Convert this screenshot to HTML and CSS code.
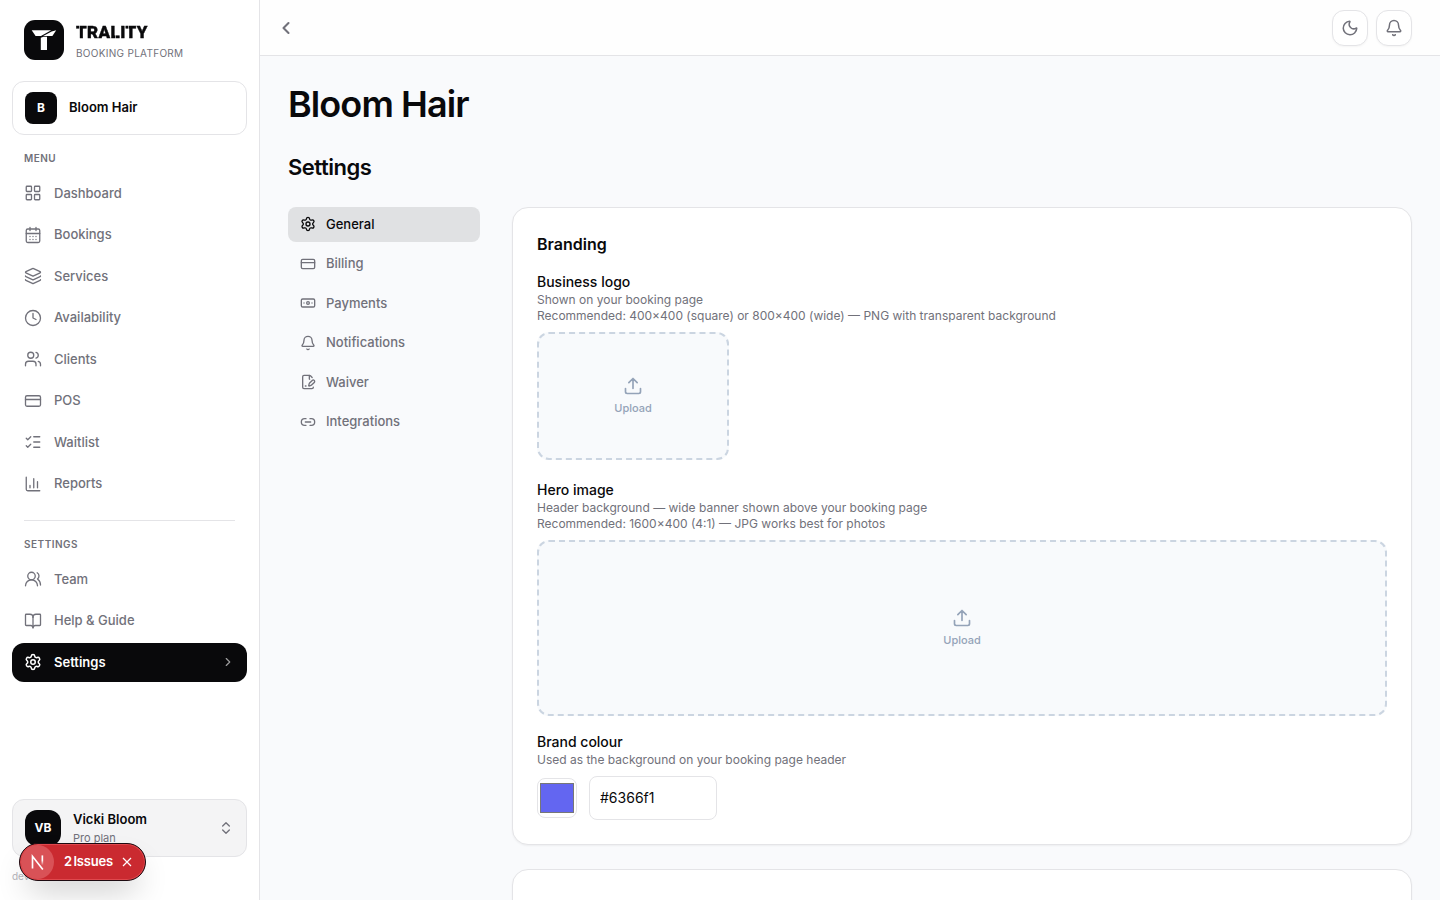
FILE: index.html
```
<!DOCTYPE html>
<html lang="en">
<head>
    <meta charset="UTF-8">
    <title>Settings - Bloom Hair</title>
    <link rel="stylesheet" href="styles.css">
</head>
<body>

<aside class="sidebar">
    <div class="brand">
        <svg class="brand-mark" viewBox="0 0 40 40">
            <rect width="40" height="40" rx="11" fill="#09090b"/>
            <path d="M7.7 10.2H27.2L17 15.9H11.6Z" fill="#fff"/>
            <path d="M27.6 11.5L32.2 10.2L28.4 15.9H19.2Z" fill="#fff"/>
            <path d="M16.8 17.8L19.5 16.7H23V30H16.8Z" fill="#fff"/>
        </svg>
        <div>
            <div class="brand-name">TRALITY</div>
            <div class="brand-sub">BOOKING PLATFORM</div>
        </div>
    </div>

    <div class="org">
        <div class="org-avatar">B</div>
        <span>Bloom Hair</span>
    </div>

    <div class="nav-label">MENU</div>
    <nav class="nav">
        <a class="nav-item">
            <svg class="icon" viewBox="0 0 24 24"><rect x="3" y="3" width="7" height="7" rx="1"/><rect x="14" y="3" width="7" height="7" rx="1"/><rect x="14" y="14" width="7" height="7" rx="1"/><rect x="3" y="14" width="7" height="7" rx="1"/></svg>
            Dashboard
        </a>
        <a class="nav-item">
            <svg class="icon" viewBox="0 0 24 24"><path d="M8 2v4M16 2v4"/><rect x="3" y="4" width="18" height="18" rx="2"/><path d="M3 10h18M8 14h.01M12 14h.01M16 14h.01M8 18h.01M12 18h.01M16 18h.01"/></svg>
            Bookings
        </a>
        <a class="nav-item">
            <svg class="icon" viewBox="0 0 24 24"><path d="M12.83 2.18a2 2 0 0 0-1.66 0L2.6 6.08a1 1 0 0 0 0 1.83l8.58 3.91a2 2 0 0 0 1.66 0l8.58-3.9a1 1 0 0 0 0-1.83z"/><path d="M2 12a1 1 0 0 0 .58.91l8.6 3.91a2 2 0 0 0 1.65 0l8.58-3.9A1 1 0 0 0 22 12"/><path d="M2 17a1 1 0 0 0 .58.91l8.6 3.91a2 2 0 0 0 1.65 0l8.58-3.9A1 1 0 0 0 22 17"/></svg>
            Services
        </a>
        <a class="nav-item">
            <svg class="icon" viewBox="0 0 24 24"><circle cx="12" cy="12" r="10"/><path d="M12 6v6l4 2"/></svg>
            Availability
        </a>
        <a class="nav-item">
            <svg class="icon" viewBox="0 0 24 24"><path d="M16 21v-2a4 4 0 0 0-4-4H6a4 4 0 0 0-4 4v2"/><circle cx="9" cy="7" r="4"/><path d="M22 21v-2a4 4 0 0 0-3-3.87M16 3.13a4 4 0 0 1 0 7.75"/></svg>
            Clients
        </a>
        <a class="nav-item">
            <svg class="icon" viewBox="0 0 24 24"><rect x="2" y="5" width="20" height="14" rx="2"/><path d="M2 10h20"/></svg>
            POS
        </a>
        <a class="nav-item">
            <svg class="icon" viewBox="0 0 24 24"><path d="M13 5h8M13 12h8M13 19h8M3 17l2 2 4-4M3 7l2 2 4-4"/></svg>
            Waitlist
        </a>
        <a class="nav-item">
            <svg class="icon" viewBox="0 0 24 24"><path d="M3 3v16a2 2 0 0 0 2 2h16M18 17V9M13 17V5M8 17v-3"/></svg>
            Reports
        </a>
    </nav>

    <div class="divider"></div>

    <div class="nav-label">SETTINGS</div>
    <nav class="nav">
        <a class="nav-item">
            <svg class="icon" viewBox="0 0 24 24"><path d="M18 21a8 8 0 0 0-16 0"/><circle cx="10" cy="8" r="5"/><path d="M22 20c0-3.37-2-6.5-4-8a5 5 0 0 0-.45-8.3"/></svg>
            Team
        </a>
        <a class="nav-item">
            <svg class="icon" viewBox="0 0 24 24"><path d="M12 7v14"/><path d="M3 18a1 1 0 0 1-1-1V4a1 1 0 0 1 1-1h5a4 4 0 0 1 4 4 4 4 0 0 1 4-4h5a1 1 0 0 1 1 1v13a1 1 0 0 1-1 1h-6a3 3 0 0 0-3 3 3 3 0 0 0-3-3z"/></svg>
            Help &amp; Guide
        </a>
        <a class="nav-item active">
            <svg class="icon" viewBox="0 0 24 24"><path d="M9.671 4.136a2.34 2.34 0 0 1 4.659 0 2.34 2.34 0 0 0 3.319 1.915 2.34 2.34 0 0 1 2.33 4.033 2.34 2.34 0 0 0 0 3.831 2.34 2.34 0 0 1-2.33 4.033 2.34 2.34 0 0 0-3.319 1.915 2.34 2.34 0 0 1-4.659 0 2.34 2.34 0 0 0-3.32-1.915 2.34 2.34 0 0 1-2.33-4.033 2.34 2.34 0 0 0 0-3.831A2.34 2.34 0 0 1 6.35 6.051a2.34 2.34 0 0 0 3.319-1.915"/><circle cx="12" cy="12" r="3"/></svg>
            Settings
            <svg class="icon chevron" viewBox="0 0 24 24"><path d="m9 18 6-6-6-6"/></svg>
        </a>
    </nav>

    <div class="sidebar-footer">
        <div class="user">
            <div class="user-avatar">VB</div>
            <div class="user-text">
                <div class="user-name">Vicki Bloom</div>
                <div class="user-plan">Pro plan</div>
            </div>
            <svg class="icon updown" viewBox="0 0 24 24"><path d="m7 15 5 5 5-5M7 9l5-5 5 5"/></svg>
        </div>
        <div class="version">dev</div>
    </div>
</aside>

<div class="page">
    <header class="topbar">
        <svg class="icon back" viewBox="0 0 24 24"><path d="m15 18-6-6 6-6"/></svg>
        <div class="topbar-actions">
            <button class="icon-btn">
                <svg class="icon" viewBox="0 0 24 24"><path d="M20.985 12.486a9 9 0 1 1-9.473-9.472c.405-.022.617.46.402.803a6 6 0 0 0 8.268 8.268c.344-.215.825-.004.803.401"/></svg>
            </button>
            <button class="icon-btn">
                <svg class="icon" viewBox="0 0 24 24"><path d="M10.268 21a2 2 0 0 0 3.464 0"/><path d="M3.262 15.326A1 1 0 0 0 4 17h16a1 1 0 0 0 .74-1.673C19.41 13.956 18 12.499 18 8A6 6 0 0 0 6 8c0 4.499-1.411 5.956-2.738 7.326"/></svg>
            </button>
        </div>
    </header>

    <main class="main">
        <h1>Bloom Hair</h1>
        <h2>Settings</h2>

        <div class="settings">
            <nav class="tabs">
                <a class="tab active">
                    <svg class="icon" viewBox="0 0 24 24"><path d="M9.671 4.136a2.34 2.34 0 0 1 4.659 0 2.34 2.34 0 0 0 3.319 1.915 2.34 2.34 0 0 1 2.33 4.033 2.34 2.34 0 0 0 0 3.831 2.34 2.34 0 0 1-2.33 4.033 2.34 2.34 0 0 0-3.319 1.915 2.34 2.34 0 0 1-4.659 0 2.34 2.34 0 0 0-3.32-1.915 2.34 2.34 0 0 1-2.33-4.033 2.34 2.34 0 0 0 0-3.831A2.34 2.34 0 0 1 6.35 6.051a2.34 2.34 0 0 0 3.319-1.915"/><circle cx="12" cy="12" r="3"/></svg>
                    General
                </a>
                <a class="tab">
                    <svg class="icon" viewBox="0 0 24 24"><rect x="2" y="5" width="20" height="14" rx="2"/><path d="M2 10h20"/></svg>
                    Billing
                </a>
                <a class="tab">
                    <svg class="icon" viewBox="0 0 24 24"><rect x="2" y="6" width="20" height="12" rx="2"/><circle cx="12" cy="12" r="2"/><path d="M6 12h.01M18 12h.01"/></svg>
                    Payments
                </a>
                <a class="tab">
                    <svg class="icon" viewBox="0 0 24 24"><path d="M10.268 21a2 2 0 0 0 3.464 0"/><path d="M3.262 15.326A1 1 0 0 0 4 17h16a1 1 0 0 0 .74-1.673C19.41 13.956 18 12.499 18 8A6 6 0 0 0 6 8c0 4.499-1.411 5.956-2.738 7.326"/></svg>
                    Notifications
                </a>
                <a class="tab">
                    <svg class="icon" viewBox="0 0 24 24"><path d="M14.364 13.634a2 2 0 0 0-.506.854l-.837 2.87a.5.5 0 0 0 .62.62l2.87-.837a2 2 0 0 0 .854-.506l4.013-4.009a1 1 0 0 0-3.004-3.004z"/><path d="M14.487 7.858A1 1 0 0 1 14 7V2"/><path d="M20 19.645V20a2 2 0 0 1-2 2H6a2 2 0 0 1-2-2V4a2 2 0 0 1 2-2h8a2.4 2.4 0 0 1 1.704.706l2.516 2.516"/><path d="M8 18h1"/></svg>
                    Waiver
                </a>
                <a class="tab">
                    <svg class="icon" viewBox="0 0 24 24"><path d="M9 17H7A5 5 0 0 1 7 7h2M15 7h2a5 5 0 1 1 0 10h-2M8 12h8"/></svg>
                    Integrations
                </a>
            </nav>

            <div class="cards">
                <section class="card">
                    <h3>Branding</h3>

                    <div class="field logo-field">
                        <div class="field-label">Business logo</div>
                        <p>Shown on your booking page</p>
                        <p>Recommended: 400×400 (square) or 800×400 (wide) — PNG with transparent background</p>
                        <div class="upload upload-logo">
                            <svg class="icon" viewBox="0 0 24 24"><path d="M12 3v12M17 8l-5-5-5 5M21 15v4a2 2 0 0 1-2 2H5a2 2 0 0 1-2-2v-4"/></svg>
                            <span>Upload</span>
                        </div>
                    </div>

                    <div class="field">
                        <div class="field-label">Hero image</div>
                        <p>Header background — wide banner shown above your booking page</p>
                        <p>Recommended: 1600×400 (4:1) — JPG works best for photos</p>
                        <div class="upload upload-hero">
                            <svg class="icon" viewBox="0 0 24 24"><path d="M12 3v12M17 8l-5-5-5 5M21 15v4a2 2 0 0 1-2 2H5a2 2 0 0 1-2-2v-4"/></svg>
                            <span>Upload</span>
                        </div>
                    </div>

                    <div class="field">
                        <div class="field-label">Brand colour</div>
                        <p>Used as the background on your booking page header</p>
                        <div class="colour-row">
                            <div class="colour-picker"><div class="swatch"></div></div>
                            <input class="hex" type="text" value="#6366f1">
                        </div>
                    </div>
                </section>

                <section class="card next-card"></section>
            </div>
        </div>
    </main>
</div>

<!-- dev overlay badge -->
<div class="issues">
    <div class="issues-logo">
        <svg viewBox="0 0 20 20">
            <defs>
                <linearGradient id="n-fade" x1="0" y1="0" x2="0" y2="1"><stop offset="0.5" stop-color="#fff"/><stop offset="1" stop-color="#fff" stop-opacity="0"/></linearGradient>
            </defs>
            <path d="M5 15.8V4.8L14.4 16.8" fill="none" stroke="#fff" stroke-width="1.5"/>
            <rect x="13.2" y="4" width="1.5" height="9" fill="url(#n-fade)"/>
        </svg>
    </div>
    <span>2 Issues</span>
    <svg class="issues-close" viewBox="0 0 12 12"><path d="M2 2l8 8M10 2l-8 8"/></svg>
</div>

</body>
</html>
```
FILE: styles.css
```
* {
    box-sizing: border-box;
}

body {
    margin: 0;
    height: 900px;
    display: flex;
    overflow: hidden;
    font-family: Inter, "Liberation Sans", sans-serif;
    color: #09090b;
    background-color: #f9fafc;
}

h1, h2, h3, p {
    margin: 0;
}

.icon {
    width: 18px;
    height: 18px;
    flex-shrink: 0;
    fill: none;
    stroke: currentColor;
    stroke-width: 2;
    stroke-linecap: round;
    stroke-linejoin: round;
}

/* Sidebar */
.sidebar {
    width: 260px;
    height: 900px;
    flex-shrink: 0;
    display: flex;
    flex-direction: column;
    background-color: #fff;
    border-right: 1px solid #e4e4e7;
    padding: 20px 12px 0;
}

.brand {
    display: flex;
    gap: 12px;
    padding: 0 12px;
    height: 40px;
}

.brand-mark {
    width: 40px;
    height: 40px;
}

/* stencil cuts through the wordmark */
.brand-name {
    font-family: Roboto, sans-serif;
    font-weight: 900;
    font-size: 17px;
    line-height: 24px;
    letter-spacing: 0.4px;
    color: transparent;
    -webkit-text-stroke: 0.4px transparent;
    background-image: linear-gradient(90deg,
        #09090b 3px, #999 3px 4px,
        #09090b 4px 39px, #999 39px 40px,
        #09090b 40px 52px, #999 52px 53px,
        #09090b 53px);
    -webkit-background-clip: text;
    background-clip: text;
}

.brand-sub {
    font-size: 10px;
    line-height: 15px;
    margin-top: 2px;
    letter-spacing: 0.3px;
    color: #71717a;
    white-space: nowrap;
}

.org {
    display: flex;
    align-items: center;
    gap: 12px;
    height: 54px;
    margin-top: 21px;
    padding: 0 12px;
    border: 1px solid #e4e4e7;
    border-radius: 12px;
    font-size: 13px;
    line-height: 16px;
    font-weight: 600;
}

.org span {
    padding-bottom: 2px;
}

.org-avatar {
    width: 32px;
    height: 32px;
    padding-bottom: 1px;
    border-radius: 8px;
    background-color: #09090b;
    color: #fff;
    font-size: 12px;
    font-weight: 700;
    display: flex;
    align-items: center;
    justify-content: center;
}

.nav-label {
    margin: 16px 12px 7.5px;
    font-size: 10px;
    font-weight: 600;
    line-height: 15px;
    letter-spacing: 0.5px;
    color: #71717a;
}

.nav {
    display: flex;
    flex-direction: column;
    gap: 2px;
}

.nav-item {
    display: flex;
    align-items: center;
    gap: 12px;
    height: 39.5px;
    padding: 0 12px;
    border-radius: 12px;
    font-size: 13px;
    line-height: 19.5px;
    font-weight: 500;
    color: #71717a;
}

.nav-item .icon {
    stroke-width: 1.75;
}

.nav-item.active {
    background-color: #09090b;
    color: #fff;
    font-weight: 600;
}

.nav-item.active .icon {
    stroke-width: 2;
}

.nav-item .chevron {
    width: 14px;
    height: 14px;
    margin-left: auto;
    opacity: 0.6;
}

.divider {
    height: 1px;
    margin: 16.5px 12px 0;
    background-color: #e4e4e7;
}

.sidebar-footer {
    margin-top: auto;
    height: 101px;
}

.user {
    display: flex;
    align-items: center;
    gap: 12px;
    height: 58px;
    padding: 0 12px;
    border: 1px solid #e4e4e7;
    border-radius: 12px;
    background-color: #f4f4f5;
}

.user-avatar {
    width: 36px;
    height: 36px;
    padding-bottom: 1px;
    border-radius: 12px;
    background-color: #09090b;
    color: #fff;
    font-size: 12px;
    font-weight: 700;
    display: flex;
    align-items: center;
    justify-content: center;
}

.user-name {
    font-size: 13px;
    font-weight: 600;
    line-height: 19.5px;
}

.user-plan {
    font-size: 11px;
    line-height: 16.5px;
    margin-top: 1px;
    color: #71717a;
}

.user .updown {
    width: 16px;
    height: 16px;
    margin-left: auto;
    color: #71717a;
}

.version {
    margin-top: 12px;
    font-size: 10px;
    line-height: 15px;
    color: #b4b4ba;
}

/* Page */
.page {
    flex: 1;
    min-width: 0;
    height: 900px;
    overflow: hidden;
}

.topbar {
    display: flex;
    align-items: center;
    justify-content: space-between;
    height: 56px;
    padding: 0 28px 0 16px;
    background-color: #fefefe;
    border-bottom: 1px solid #e4e4e7;
}

.back {
    width: 20px;
    height: 20px;
    color: #71717a;
    stroke-width: 2.5;
}

.topbar-actions {
    display: flex;
    gap: 8px;
}

.icon-btn {
    display: flex;
    align-items: center;
    justify-content: center;
    width: 36px;
    height: 36px;
    padding: 0;
    border: 1px solid #e4e4e7;
    border-radius: 12px;
    background-color: #fff;
    color: #71717a;
    box-shadow: 0 1px 2px rgba(0, 0, 0, 0.04);
}

.main {
    padding: 28px;
}

h1 {
    font-size: 36px;
    font-weight: 600;
    line-height: 40px;
    letter-spacing: -0.9px;
}

h2 {
    margin-top: 27px;
    font-size: 22px;
    font-weight: 600;
    line-height: 32px;
    letter-spacing: -0.5px;
}

.settings {
    display: flex;
    gap: 32px;
    margin-top: 24px;
}

.tabs {
    width: 192px;
    flex-shrink: 0;
    display: flex;
    flex-direction: column;
    gap: 4px;
    margin-top: -0.5px;
}

.tab {
    display: flex;
    align-items: center;
    gap: 10px;
    height: 35.5px;
    padding: 0 12px;
    border-radius: 8px;
    font-size: 13px;
    line-height: 19.5px;
    font-weight: 500;
    color: #71717a;
}

.tab .icon {
    width: 16px;
    height: 16px;
}

.tab.active {
    background-color: #e0e1e3;
    color: #09090b;
}

.cards {
    flex: 1;
    display: flex;
    flex-direction: column;
    gap: 24px;
}

.card {
    height: 638px;
    padding: 24px;
    border: 1px solid #e4e4e7;
    border-radius: 16px;
    background-color: #fff;
    box-shadow: 0 1px 2px rgba(0, 0, 0, 0.05);
}

.next-card {
    height: 200px;
}

h3 {
    font-size: 16px;
    font-weight: 600;
    line-height: 24px;
}

.field {
    margin-top: 16px;
}

.logo-field {
    margin-bottom: 20px;
}

.field-label {
    font-size: 14px;
    font-weight: 500;
    line-height: 20px;
}

.field p {
    font-size: 12px;
    line-height: 16px;
    color: #71717a;
}

.upload {
    display: flex;
    flex-direction: column;
    align-items: center;
    justify-content: center;
    gap: 4px;
    margin-top: 8px;
    border: 2px dashed #cbd5e1;
    border-radius: 12px;
    background-color: #f8fafc;
    color: #94a3b8;
    font-size: 11px;
    font-weight: 500;
    line-height: 16.5px;
}

.upload .icon {
    width: 20px;
    height: 20px;
}

.upload-logo {
    width: 192px;
    height: 128px;
}

.upload-hero {
    height: 176px;
}

.colour-row {
    display: flex;
    align-items: center;
    gap: 12px;
    margin-top: 8px;
}

.colour-picker {
    width: 40px;
    height: 40px;
    padding: 4px 2px;
    border: 1px solid #e4e4e7;
    border-radius: 8px;
}

.swatch {
    height: 30px;
    border: 1px solid #777;
    background-color: #6366f1;
}

.hex {
    width: 128px;
    height: 44px;
    padding: 0 10px 2px;
    border: 1px solid #e4e4e7;
    border-radius: 8px;
    background-color: #fff;
    color: #09090b;
    font-family: inherit;
    font-size: 14px;
}

/* Issues badge */
.issues {
    position: absolute;
    left: 19px;
    top: 843px;
    width: 127px;
    height: 38px;
    display: flex;
    align-items: center;
    padding-left: 1px;
    border: 1px solid #1c0a10;
    border-radius: 19px;
    background-color: #ca2a30;
    box-shadow: inset 0 0 0 1px #e0484d, 0 16px 32px -8px rgba(0, 0, 0, 0.24);
    color: #fff;
    font-size: 13px;
    font-weight: 600;
    letter-spacing: -0.2px;
    word-spacing: -1.5px;
}

.issues span {
    padding-bottom: 2px;
}

.issues-logo {
    width: 33px;
    height: 34px;
    margin-right: 10px;
    border-radius: 50%;
    background-color: #d95257;
    display: flex;
    align-items: center;
    justify-content: center;
}

.issues-logo svg {
    width: 22px;
    height: 22px;
}

.issues-close {
    width: 12px;
    height: 12px;
    margin-left: 8px;
    fill: none;
    stroke: #fff;
    stroke-width: 1.2;
}
```
